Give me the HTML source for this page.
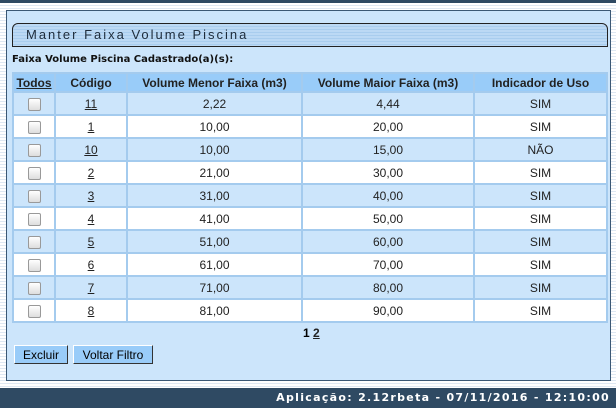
<!DOCTYPE html><html><head><style>
body{margin:0;width:616px;height:408px;overflow:hidden;background:#fff;font-family:"Liberation Sans",sans-serif;position:relative}
.top{position:absolute;left:0;top:0;width:616px;height:3px;background:#2f4a63}
.stripes{position:absolute;left:0;top:3px;width:616px;height:385px;background:repeating-linear-gradient(#fff 0 2px,#dfe8f2 2px 3px)}
.panel{position:absolute;left:6px;top:10px;width:603px;height:369px;background:#cce5fb;border:1px solid #3b5874}
.title{position:absolute;left:12px;top:23px;border:1px solid #222;border-radius:6px 6px 0 0;background:repeating-linear-gradient(#bcd9f4 0 2px,#a9cdee 2px 3px);font-size:13px;letter-spacing:2px;color:#1d2b3a;line-height:22px;padding-left:13px;box-sizing:border-box;width:596px;height:24px}
.lbl{position:absolute;left:12px;top:54px;font-size:10px;font-weight:bold;font-family:"DejaVu Sans",sans-serif;color:#111}
table{position:absolute;left:12px;top:72px;width:596px;border-collapse:collapse;border-top:2px solid #111;font-size:12px;color:#222}
td,th{border:2px solid #a4cbee;text-align:center;padding:0;height:21px}
th{background:#99ccf9;font-weight:bold;color:#222;height:17px}
tr.o td{background:#cce5fb}tr.e td{background:#fff}
a{color:#222;text-decoration:underline}
.cb{display:inline-block;width:11px;height:11px;border:1px solid #999;border-radius:2px;background:linear-gradient(#fff,#ddd);vertical-align:middle}
.pg{position:absolute;left:303px;top:326px;font-size:12px;font-weight:bold}
.btn{position:absolute;top:345px;height:19px;background:#99ccf9;border:1px solid #333;border-left-color:#fff;border-top-color:#fff;font-size:12px;line-height:18px;text-align:center;box-sizing:border-box}
.foot{position:absolute;left:0;top:388px;width:616px;height:20px;background:#2f4a63;color:#fff;font-size:11px;font-weight:bold;letter-spacing:1.3px;text-align:right;line-height:20px;box-sizing:border-box;padding-right:6px;font-family:"DejaVu Sans",sans-serif}
</style></head><body>
<div class="top"></div><div class="stripes"></div>
<div class="panel"></div>
<div class="title">Manter Faixa Volume Piscina</div>
<div class="lbl">Faixa Volume Piscina Cadastrado(a)(s):</div>
<table>
<tr><th style="width:40px"><a>Todos</a></th><th style="width:70px">Código</th><th style="width:173px">Volume Menor Faixa (m3)</th><th style="width:170px">Volume Maior Faixa (m3)</th><th>Indicador de Uso</th></tr>
<tr class="o"><td><span class="cb"></span></td><td><a>11</a></td><td>2,22</td><td>4,44</td><td>SIM</td></tr>
<tr class="e"><td><span class="cb"></span></td><td><a>1</a></td><td>10,00</td><td>20,00</td><td>SIM</td></tr>
<tr class="o"><td><span class="cb"></span></td><td><a>10</a></td><td>10,00</td><td>15,00</td><td>NÃO</td></tr>
<tr class="e"><td><span class="cb"></span></td><td><a>2</a></td><td>21,00</td><td>30,00</td><td>SIM</td></tr>
<tr class="o"><td><span class="cb"></span></td><td><a>3</a></td><td>31,00</td><td>40,00</td><td>SIM</td></tr>
<tr class="e"><td><span class="cb"></span></td><td><a>4</a></td><td>41,00</td><td>50,00</td><td>SIM</td></tr>
<tr class="o"><td><span class="cb"></span></td><td><a>5</a></td><td>51,00</td><td>60,00</td><td>SIM</td></tr>
<tr class="e"><td><span class="cb"></span></td><td><a>6</a></td><td>61,00</td><td>70,00</td><td>SIM</td></tr>
<tr class="o"><td><span class="cb"></span></td><td><a>7</a></td><td>71,00</td><td>80,00</td><td>SIM</td></tr>
<tr class="e"><td><span class="cb"></span></td><td><a>8</a></td><td>81,00</td><td>90,00</td><td>SIM</td></tr>
</table>
<div class="pg">1 <a>2</a></div>
<div class="btn" style="left:14px;width:54px">Excluir</div>
<div class="btn" style="left:73px;width:80px">Voltar Filtro</div>
<div class="foot">Aplicação: 2.12rbeta - 07/11/2016 - 12:10:00</div>
</body></html>
